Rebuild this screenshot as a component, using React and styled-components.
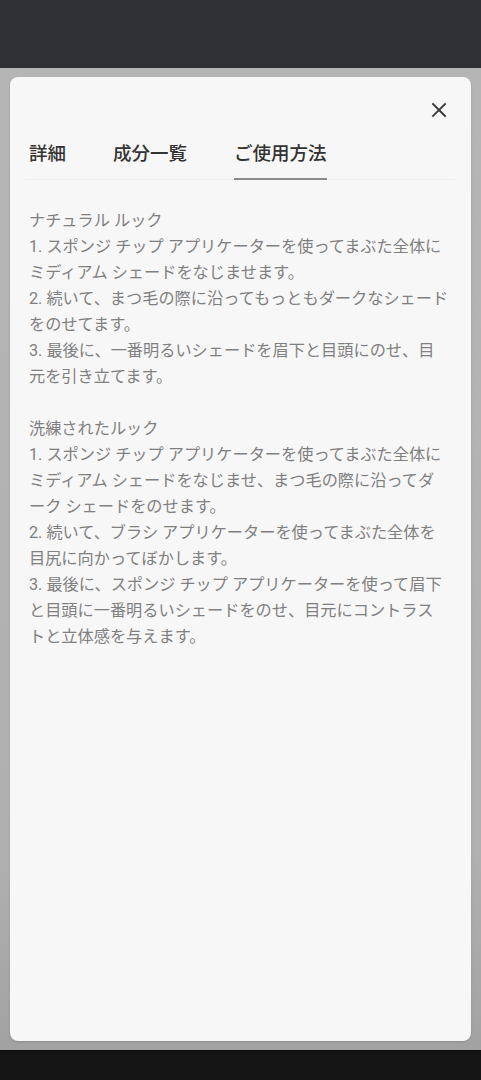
import React from "react";
import styled, { createGlobalStyle } from "styled-components";

const tabs = ["詳細", "成分一覧", "ご使用方法"];

// each step keeps the line breaks of the original layout
const sections = [
  {
    title: "ナチュラル ルック",
    steps: [
      ["1. スポンジ チップ アプリケーターを使ってまぶた全体に", "ミディアム シェードをなじませます。"],
      ["2. 続いて、まつ毛の際に沿ってもっともダークなシェード", "をのせてます。"],
      ["3. 最後に、一番明るいシェードを眉下と目頭にのせ、目", "元を引き立てます。"],
    ],
  },
  {
    title: "洗練されたルック",
    steps: [
      [
        "1. スポンジ チップ アプリケーターを使ってまぶた全体に",
        "ミディアム シェードをなじませ、まつ毛の際に沿ってダ",
        "ーク シェードをのせます。",
      ],
      ["2. 続いて、ブラシ アプリケーターを使ってまぶた全体を", "目尻に向かってぼかします。"],
      [
        "3. 最後に、スポンジ チップ アプリケーターを使って眉下",
        "と目頭に一番明るいシェードをのせ、目元にコントラス",
        "トと立体感を与えます。",
      ],
    ],
  },
];

export default function App() {
  return (
    <>
      <GlobalStyle />
      <Screen>
        <StatusBar />
        <Overlay>
          <Sheet>
            <Header>
              <CloseButton aria-label="close">
                <svg width="16" height="16" viewBox="0 0 16 16">
                  <path
                    d="M2 2 L14 14 M14 2 L2 14"
                    stroke="#3a3a3a"
                    strokeWidth="1.9"
                    strokeLinecap="square"
                  />
                </svg>
              </CloseButton>
            </Header>
            <TabList>
              {tabs.map((t, i) => (
                <Tab key={t} $active={i === 2}>
                  {t}
                </Tab>
              ))}
            </TabList>
            <Body>
              {sections.map((s) => (
                <Section key={s.title}>
                  <Step>
                    <Row>{s.title}</Row>
                  </Step>
                  {s.steps.map((lines) => (
                    <Step key={lines[0]}>
                      {lines.map((l) => (
                        <Row key={l}>{l}</Row>
                      ))}
                    </Step>
                  ))}
                </Section>
              ))}
            </Body>
          </Sheet>
        </Overlay>
        <NavBar />
      </Screen>
    </>
  );
}

const GlobalStyle = createGlobalStyle`
  body {
    margin: 0;
    background: #141414;
    font-family: Roboto, "Noto Sans CJK JP", sans-serif;
  }
`;

const Screen = styled.div`
  display: flex;
  flex-direction: column;
  height: 1080px;
  width: 481px;
  overflow: hidden;
`;

const StatusBar = styled.div`
  height: 68px;
  background: #303135;
  flex-shrink: 0;
`;

const Overlay = styled.div`
  flex: 1;
  display: flex;
  padding: 9px 10px 9px 10px;
  background: linear-gradient(#b5b5b5 0%, #b0b0b0 80%, #a2a2a2 100%);
`;

const NavBar = styled.div`
  height: 29px;
  flex-shrink: 0;
  background: #141414;
  border-top: 1px solid #0c0c0c;
`;

const Sheet = styled.div`
  flex: 1;
  display: flex;
  flex-direction: column;
  background: #f7f7f7;
  border-radius: 8px;
  box-shadow: 0 1px 2px rgba(0, 0, 0, 0.15);
`;

const Header = styled.div`
  display: flex;
  justify-content: flex-end;
  padding: 21px 20px 0 0;
`;

const CloseButton = styled.button`
  width: 24px;
  height: 24px;
  display: flex;
  align-items: center;
  justify-content: center;
  border: 0;
  padding: 0;
  background: transparent;
`;

const TabList = styled.div`
  display: flex;
  gap: 47px;
  margin: 19px 16px 0 15px;
  padding-left: 4px;
  border-bottom: 1px solid #ececec;
`;

const Tab = styled.div`
  font-size: 18.5px;
  line-height: 26px;
  font-weight: 500;
  color: #333;
  padding-bottom: 11px;
  margin-bottom: -1px;
  border-bottom: 2px solid ${(p) => (p.$active ? "#8a8a8a" : "transparent")};
`;

const Body = styled.div`
  display: flex;
  flex-direction: column;
  gap: 26px;
  padding: 28px 10px 0 19px;
`;

const Section = styled.div`
  display: flex;
  flex-direction: column;
`;

const Step = styled.p`
  margin: 0;
  display: flex;
  flex-direction: column;
  font-size: 16.2px;
  line-height: 26px;
  color: #808080;
`;

const Row = styled.span`
  white-space: nowrap;
`;
